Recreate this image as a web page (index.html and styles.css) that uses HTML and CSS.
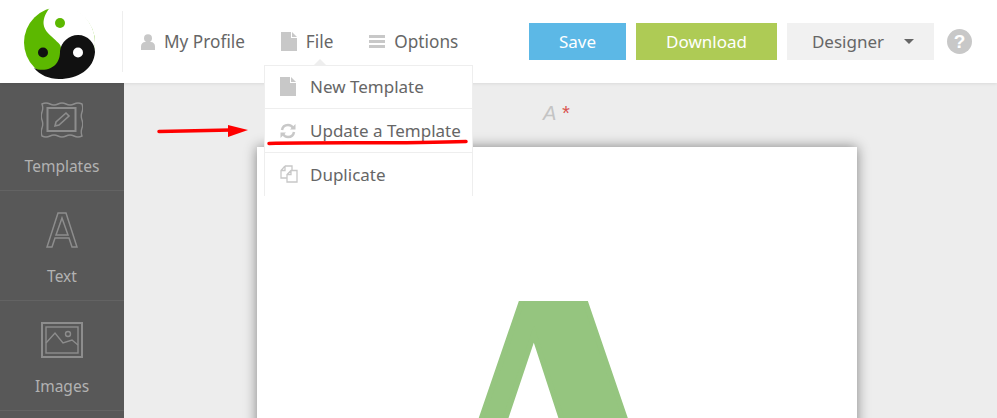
FILE: index.html
```html
<!DOCTYPE html>
<html lang="en">
<head>
<meta charset="utf-8">
<title>Designer</title>
<link rel="stylesheet" href="styles.css">
</head>
<body>
<div class="app">
  <header class="topbar">
    <div class="logo-cell">
      <svg class="logo" viewBox="0 0 71 73" width="71" height="73">
        <circle cx="35.500" cy="36.500" r="35.500" fill="#5cb800"/>
        <path d="M26 1.300C29 .4 32 0 35.500 0 55 0 71 16 71 36.500c0 3-.3 6-1 9L37 42C37 38 33 36 27 30 20 24 15 16 26 1.300Z" fill="#fff"/>
        <path d="M10 62C18 66 28 63 32 58c4-5 4-10 4-13C37 36 45 29 54 29c10 0 17 8 17 17C70 63 54 73 35 73 25 73 16 69 10 62Z" fill="#111"/>
        <circle cx="36" cy="17" r="5" fill="#5cb800"/>
        <circle cx="19" cy="46.500" r="5" fill="#111"/>
        <circle cx="54" cy="46.500" r="5" fill="#fff"/>
      </svg>
    </div>
    <nav class="nav">
      <a class="nav-item"><svg class="nav-icon" viewBox="0 0 14 16" width="14" height="16"><circle cx="7" cy="4.200" r="4" fill="#c8c8c8"/><path d="M0 16v-3.500C0 9.500 2 8 4 8h6c2 0 4 1.500 4 4.500V16Z" fill="#c8c8c8"/></svg>My Profile</a>
      <a class="nav-item"><svg class="nav-icon" viewBox="0 0 16 19" width="16" height="19"><path d="M0 0h10v6h6v13H0Z" fill="#c8c8c8"/><path d="M11 0l5 5h-5Z" fill="#c8c8c8"/></svg>File</a>
      <a class="nav-item"><svg class="nav-icon" viewBox="0 0 16 13" width="16" height="13"><path d="M0 0h16v3H0ZM0 5h16v3H0ZM0 10h16v3H0Z" fill="#c8c8c8"/></svg>Options</a>
    </nav>
    <div class="actions">
      <button class="btn btn-save">Save</button>
      <button class="btn btn-download">Download</button>
      <button class="btn btn-role">Designer<span class="caret"></span></button>
      <span class="help">?</span>
    </div>
  </header>
  <div class="workspace">
    <aside class="sidebar">
      <div class="tool">
        <svg class="tool-icon" viewBox="0 0 42 36" width="42" height="36" fill="none" stroke="#8d8d8d">
          <path d="M1 2q4-2 8 0t8 0 8 0 8 0 8 0q1.500 4 0 8t0 8 0 8 0 8q-4 2-8 0t-8 0-8 0-8 0-8 0q-1.500-4 0-8t0-8 0-8 0-8Z" stroke-width="1.400"/>
          <rect x="6.500" y="6" width="28" height="23" stroke-width="2"/>
          <path d="M14 24l1-4 10-9 3 3-10 9Z" stroke-width="1.600"/>
        </svg>
        <span class="tool-label">Templates</span>
      </div>
      <div class="tool">
        <svg class="tool-icon" viewBox="0 0 32 36" width="32" height="36" fill="none" stroke="#8d8d8d" stroke-width="1.500">
          <path d="M12 1h8l11 34h-5l-3-9H9l-3 9H1ZM16 6l-6 17h12Z"/>
        </svg>
        <span class="tool-label">Text</span>
      </div>
      <div class="tool">
        <svg class="tool-icon" viewBox="0 0 42 36" width="42" height="36" fill="none" stroke="#8d8d8d" stroke-width="1.400">
          <rect x="1" y="1" width="40" height="34" stroke-width="2"/>
          <rect x="5" y="5" width="32" height="26"/>
          <path d="M5 21l9-10 8 10 9-3 6 5"/>
          <circle cx="27" cy="12" r="2.500"/>
        </svg>
        <span class="tool-label">Images</span>
      </div>
    </aside>
    <main class="stage">
      <div class="stage-title">A <span class="req">*</span></div>
      <div class="sheet">
        <div class="letter-clip"><span class="sheet-letter">A</span></div>
      </div>
    </main>
  </div>
  <div class="menu">
    <div class="menu-tip"></div>
    <div class="menu-row"><svg class="menu-icon" viewBox="0 0 16 19" width="16" height="19"><path d="M0 0h10v6h6v13H0Z" fill="#c8c8c8"/><path d="M11 0l5 5h-5Z" fill="#c8c8c8"/></svg>New Template</div>
    <div class="menu-row"><svg class="menu-icon" viewBox="0 0 16 16" width="16" height="16" fill="none" stroke="#c8c8c8" stroke-width="2.500"><path d="M2 7c.5-3 3-5 6-5 2 0 4 1 5 3"/><path d="M14 9c-.5 3-3 5-6 5-2 0-4-1-5-3"/><path d="M15.500 1v5.500H10Z" fill="#c8c8c8" stroke="none"/><path d="M.5 15V9.500H6Z" fill="#c8c8c8" stroke="none"/></svg>Update a Template</div>
    <div class="menu-row"><svg class="menu-icon menu-icon-wide" viewBox="0 0 18 18" width="18" height="18" fill="#fff" stroke="#c8c8c8" stroke-width="1.300"><path d="M5 1h7v5M5 1L1 5.500V13h6M5 1v4.500H1"/><path d="M11 5.500h6V17H7V9.500ZM11 5.500v4H7"/></svg>Duplicate</div>
  </div>
  <svg class="marks" viewBox="0 0 997 418" width="997" height="418">
    <path d="M159 131.500L231 130" stroke="#f00" stroke-width="3.500" stroke-linecap="round" fill="none"/>
    <path d="M228 125l20 5-20 7Z" fill="#f00"/>
    <path d="M269 143.500C330 142 400 144 466 141.500" stroke="#f00" stroke-width="3.500" stroke-linecap="round" fill="none"/>
  </svg>
</div>
</body>
</html>
```
FILE: styles.css
```css
* { box-sizing: border-box; }
html, body { margin: 0; height: 100%; }
body { font-family: "Noto Sans", sans-serif; color: #666; overflow: hidden; background: #ededed; }
.app { position: relative; width: 997px; height: 418px; overflow: hidden; display: flex; flex-direction: column; }

.topbar { position: relative; z-index: 2; height: 83px; flex: none; display: flex; align-items: center; background: #fff; box-shadow: 0 1px 3px rgba(0,0,0,.08); }
.logo-cell { width: 123px; height: 61px; display: flex; align-items: center; padding-left: 24px; border-right: 1px solid #eee; flex: none; overflow: visible; }
.logo { flex: none; margin-top: 2px; }
.nav { display: flex; align-items: center; padding-left: 18px; gap: 36px; font-size: 17.200px; }
.nav-item { display: flex; align-items: center; gap: 9px; color: #666; }
.nav-icon { flex: none; }
.actions { margin-left: auto; display: flex; align-items: center; gap: 10px; padding-right: 25px; }
.btn { height: 37px; border: 0; font: 17px "Noto Sans", sans-serif; padding: 0; display: flex; align-items: center; justify-content: center; }
.btn-save { width: 97px; background: #5cb8e6; color: #fff; }
.btn-download { width: 141px; background: #aecb55; color: #fff; }
.btn-role { width: 147px; background: #f1f1f1; color: #666; gap: 20px; padding-left: 5px; }
.caret { width: 0; height: 0; border-left: 5.500px solid transparent; border-right: 5.500px solid transparent; border-top: 5px solid #666; }
.help { width: 25px; height: 25px; margin-left: 3px; border-radius: 50%; background: #c8c8c8; color: #fff; font: bold 19px/25px "Liberation Sans", sans-serif; text-align: center; }

.workspace { flex: 1; display: flex; min-height: 0; }
.sidebar { width: 124px; flex: none; background: #585858; }
.tool { height: 110px; display: flex; flex-direction: column; align-items: center; border-bottom: 1px solid #636363; padding-top: 21px; position: relative; }
.tool:first-child { height: 108px; padding-top: 19px; }
.tool-icon { height: 36px; flex: none; }
.tool-label { position: absolute; top: 75px; left: 0; right: 0; text-align: center; font-size: 15.500px; line-height: 20px; color: #b2b2b2; }
.tool:first-child .tool-label { top: 73px; }

.stage { flex: 1; min-width: 0; padding: 17px 0 0 133px; overflow: hidden; background: #ededed; }
.stage-title { width: 600px; height: 47px; padding-right: 2px; text-align: center; font: italic 20px/26px "Liberation Sans", sans-serif; color: #c4c4c4; }
.req { color: #d9534f; }
.sheet { width: 600px; height: 600px; background: #fff; box-shadow: 0 0 12px rgba(0,0,0,.45); overflow: hidden; display: flex; justify-content: center; }
.letter-clip { margin-top: 154px; margin-right: 8px; height: 300px; overflow: hidden; }
.sheet-letter { display: block; margin-top: -88px; font: bold 440px/1 "Liberation Serif", serif; color: #95c57f; -webkit-text-stroke: 6px #95c57f; transform: scaleX(.9); }

.menu { position: absolute; z-index: 3; left: 264px; top: 65px; width: 209px; height: 131px; background: #fff; border: 1px solid #eee; border-bottom: 0; font-size: 17px; color: #666; }
.menu-tip { position: absolute; top: -7px; left: 48px; width: 0; height: 0; border-left: 7px solid transparent; border-right: 7px solid transparent; border-bottom: 7px solid #eee; }
.menu-row { height: 44px; display: flex; align-items: center; padding-left: 15px; gap: 14px; border-bottom: 1px solid #eee; }
.menu-row:nth-child(2) { height: 43px; padding-bottom: 1px; }
.menu-row:last-child { border-bottom: 0; padding-bottom: 2px; }
.menu-icon { flex: none; }
.menu-icon-wide { margin-right: -2px; }
.marks { position: absolute; z-index: 4; left: 0; top: 0; pointer-events: none; }
```
